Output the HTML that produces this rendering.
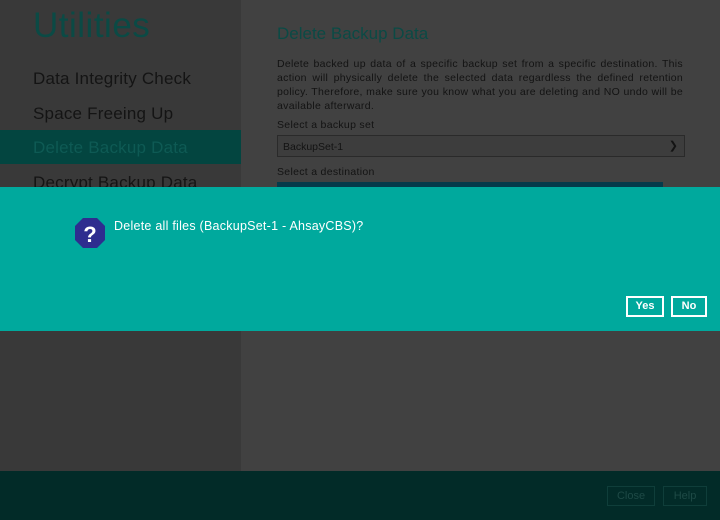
<!DOCTYPE html>
<html><head><style>
*{margin:0;padding:0;box-sizing:border-box}
body{width:720px;height:520px;overflow:hidden;background:#414141;font-family:"Liberation Sans",sans-serif;position:relative}
.side{position:absolute;left:0;top:0;width:241px;height:471px;background:#393939}
.h1{position:absolute;left:33px;top:6px;font-size:35px;color:#0b4a45;letter-spacing:0.5px}
.item{position:absolute;left:33px;font-size:17px;color:#141414;letter-spacing:0.2px}
.sel{position:absolute;left:0;top:130px;width:241px;height:34px;background:#034540}
.main{position:absolute;left:277px}
.foot{position:absolute;left:0;top:471px;width:720px;height:49px;background:#022b28}
.fb{position:absolute;top:486px;height:20px;border:1px solid #0f3e3a;color:#1e4a46;font-size:11px;text-align:center;line-height:18px}
.dlg{position:absolute;left:0;top:187px;width:720px;height:144px;background:#00a99d}
.btn{position:absolute;top:296px;height:21px;border:2px solid #fff;color:#fff;font-size:11px;font-weight:bold;text-align:center;line-height:17px}
</style></head><body>
<div class="side"></div>
<div class="h1">Utilities</div>
<div class="item" style="top:69px">Data Integrity Check</div>
<div class="item" style="top:104px">Space Freeing Up</div>
<div class="sel"></div>
<div class="item" style="top:138px;color:#0e5a54">Delete Backup Data</div>
<div class="item" style="top:173px">Decrypt Backup Data</div>
<div class="main" style="top:24px;font-size:17px;color:#0b4a45">Delete Backup Data</div>
<div class="main" style="top:57px;width:406px;font-size:10.5px;line-height:14px;color:#131313;text-align:justify;letter-spacing:0.3px">Delete backed up data of a specific backup set from a specific destination. This action will physically delete the selected data regardless the defined retention policy. Therefore, make sure you know what you are deleting and NO undo will be available afterward.</div>
<div class="main" style="top:119px;font-size:10.5px;color:#131313;letter-spacing:0.3px">Select a backup set</div>
<div class="main" style="top:135px;width:408px;height:22px;border:1px solid #2a2a2a;background:#3d3d3d;font-size:10.5px;color:#131313;padding:5px 5px">BackupSet-1<span style="position:absolute;right:6px;top:3px;font-size:11px">&#10095;</span></div>
<div class="main" style="top:166px;font-size:10.5px;color:#131313;letter-spacing:0.3px">Select a destination</div>
<div class="main" style="top:182px;width:386px;height:5px;background:#053a4a"></div>
<div class="dlg"></div>
<svg style="position:absolute;left:74px;top:217px" width="32" height="32" viewBox="0 0 32 32"><polygon points="9,1 23,1 31,9 31,23 23,31 9,31 1,23 1,9" fill="#2e2d8f"/><text x="16" y="25" text-anchor="middle" font-family="Liberation Sans" font-weight="bold" font-size="22" fill="#fff">?</text></svg>
<div style="position:absolute;left:114px;top:219px;font-size:12.5px;color:#fff;letter-spacing:0.25px">Delete all files (BackupSet-1 - AhsayCBS)?</div>
<div class="btn" style="left:626px;width:38px">Yes</div>
<div class="btn" style="left:671px;width:36px">No</div>
<div class="foot"></div>
<div class="fb" style="left:607px;width:48px">Close</div>
<div class="fb" style="left:663px;width:44px">Help</div>
</body></html>
